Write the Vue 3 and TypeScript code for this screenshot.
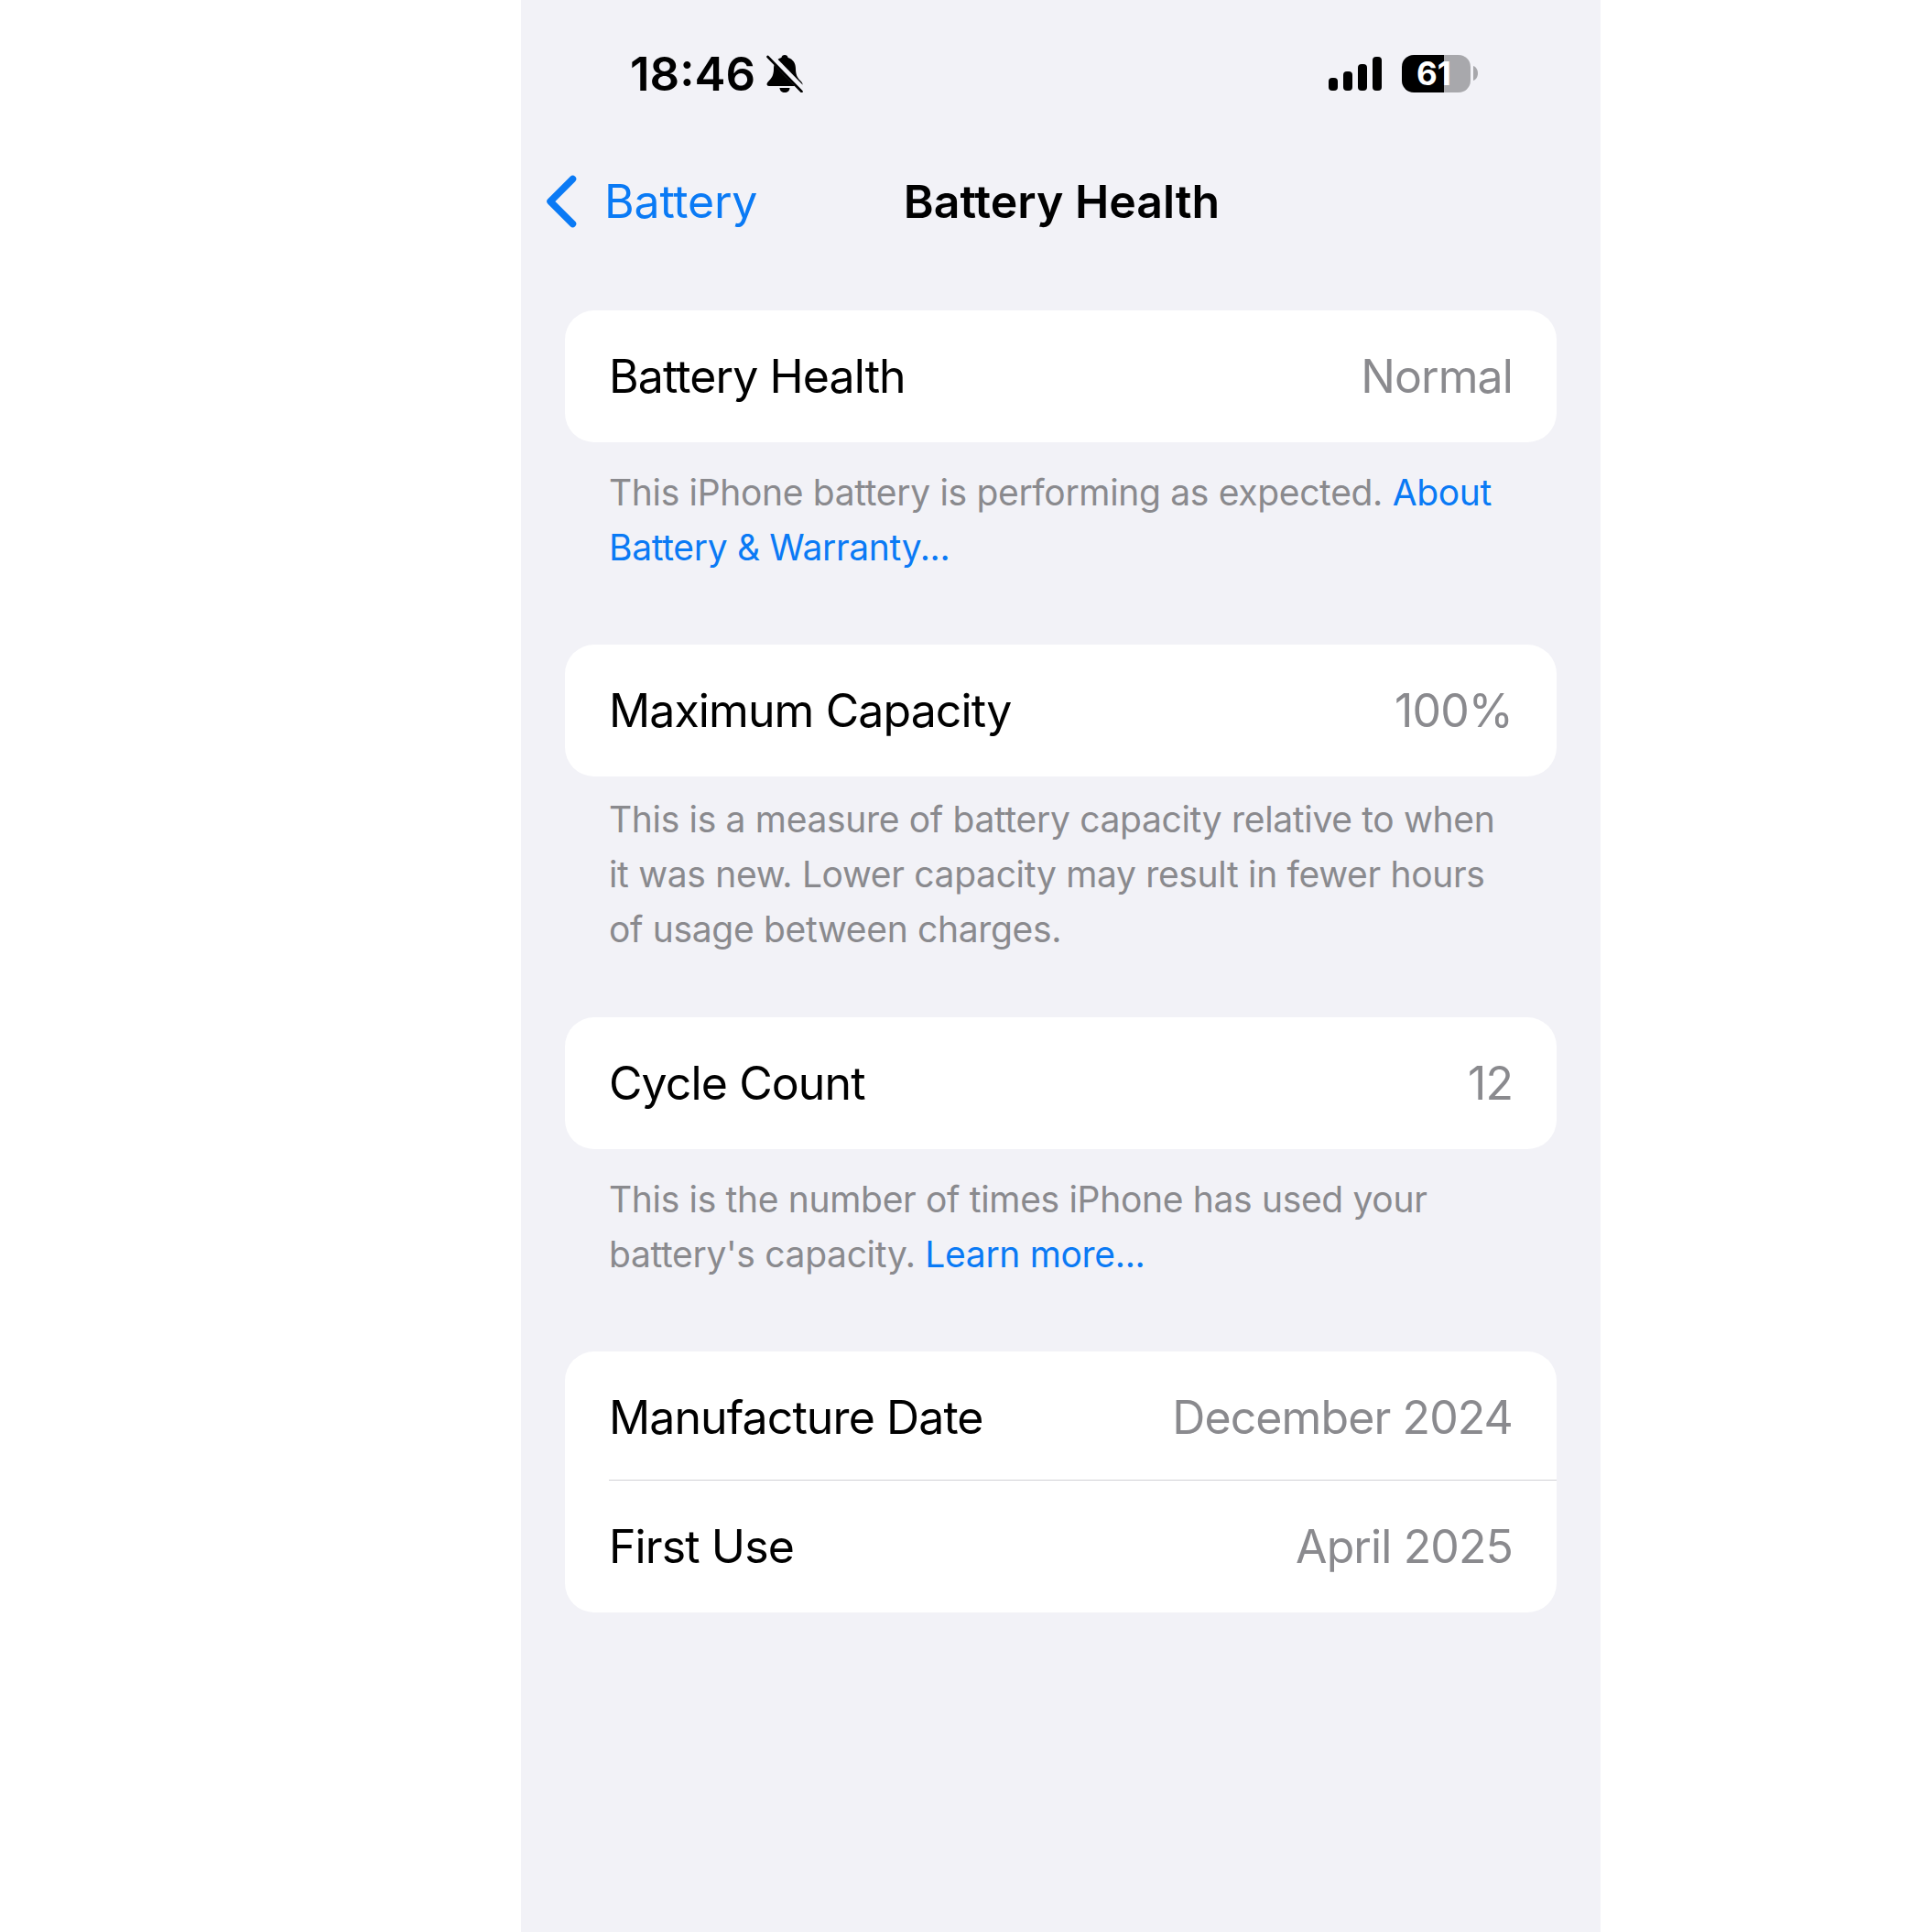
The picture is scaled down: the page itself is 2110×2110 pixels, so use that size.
<script setup lang="ts">
interface Row {
  label: string
  value: string
}

interface Section {
  rows: Row[]
  note?: string
  link?: string
  tight?: boolean
}

const sections: Section[] = [
  {
    rows: [{ label: 'Battery Health', value: 'Normal' }],
    note: 'This iPhone battery is performing as expected. ',
    link: 'About Battery & Warranty...',
  },
  {
    rows: [{ label: 'Maximum Capacity', value: '100%' }],
    note: 'This is a measure of battery capacity relative to when it was new. Lower capacity may result in fewer hours of usage between charges.',
    tight: true,
  },
  {
    rows: [{ label: 'Cycle Count', value: '12' }],
    note: "This is the number of times iPhone has used your battery's capacity. ",
    link: 'Learn more...',
  },
  {
    rows: [
      { label: 'Manufacture Date', value: 'December 2024' },
      { label: 'First Use', value: 'April 2025' },
    ],
  },
]

const bars = [14, 21, 29, 37]
</script>

<template>
  <div class="page">
    <div class="phone">
      <div class="status">
        <div class="status-left">
          <span class="time">18:46</span>
          <svg class="bell" viewBox="0 0 40 42" width="40" height="42">
            <path
              d="M20 1c-2 0-3.300 1.300-3.600 3C10.500 5.800 8 10.500 8 16c0 6-1.500 9.500-5 13-1.800 1.800-2.500 3-2.500 4 0 1.300 1 2 2.500 2h34c1.500 0 2.500-.7 2.500-2 0-1-.7-2.200-2.500-4-3.500-3.500-5-7-5-13 0-5.500-2.500-10.200-8.400-12-.3-1.700-1.600-3-3.600-3z"
              fill="#000"
            />
            <path d="M14.500 37h11c0 3-2.500 5-5.500 5s-5.500-2-5.500-5z" fill="#000" />
            <path d="M2 0l37 38" stroke="#f2f2f7" stroke-width="7" fill="none" />
            <path d="M1.500 3l37 38" stroke="#000" stroke-width="2.600" stroke-linecap="round" fill="none" />
          </svg>
        </div>
        <div class="status-right">
          <div class="signal">
            <i v-for="h in bars" :key="h" :style="{ height: h + 'px' }"></i>
          </div>
          <div class="battery"><span>61</span></div>
          <svg class="cap" viewBox="0 0 5 16" width="5" height="16">
            <path d="M0 0c3 1 5 4 5 8s-2 7-5 8z" fill="#a8a8ac" />
          </svg>
        </div>
      </div>

      <div class="nav">
        <div class="back">
          <svg class="chevron" viewBox="0 0 34 58" width="34" height="58">
            <path d="M29.500 4.500L5 29l24.500 24.500" fill="none" stroke="#0a7af5" stroke-width="7.500" stroke-linecap="round" stroke-linejoin="round" />
          </svg>
          <span>Battery</span>
        </div>
        <div class="title">Battery Health</div>
        <div></div>
      </div>

      <div class="content">
        <section v-for="s in sections" :key="s.rows[0].label">
          <div class="card">
            <div v-for="r in s.rows" :key="r.label" class="row">
              <span>{{ r.label }}</span>
              <span class="value">{{ r.value }}</span>
            </div>
          </div>
          <p v-if="s.note" class="note" :class="{ tight: s.tight }">
            {{ s.note }}<a v-if="s.link">{{ s.link }}</a>
          </p>
        </section>
      </div>
    </div>
  </div>
</template>

<style>
html,
body {
  background: #fff;
}
</style>

<style scoped>
.page {
  width: 2110px;
  height: 2110px;
  padding-left: 569px;
  box-sizing: border-box;
  overflow: hidden;
  font-family: Inter, "Liberation Sans", sans-serif;
  color: #000;
}
.phone {
  width: 1179px;
  height: 2110px;
  background: #f2f2f7;
}
.status {
  height: 160px;
  display: flex;
  align-items: center;
  justify-content: space-between;
  padding: 0 134px 0 119px;
}
.status-left {
  display: flex;
  align-items: center;
  gap: 12px;
}
.time {
  font-size: 51px;
  font-weight: 600;
}
.status-right {
  display: flex;
  align-items: center;
}
.signal {
  display: flex;
  align-items: flex-end;
  gap: 6px;
  margin-right: 22px;
}
.signal i {
  display: block;
  width: 10px;
  border-radius: 4px;
  background: #000;
}
.battery {
  width: 75px;
  height: 41px;
  padding-right: 5px;
  box-sizing: border-box;
  border-radius: 13px;
  display: flex;
  align-items: center;
  justify-content: center;
  background: linear-gradient(to right, #000 46px, #a8a8ac 46px);
  color: #fff;
  font-size: 35px;
  font-weight: 700;
}
.cap {
  margin-left: 3px;
}
.nav {
  height: 120px;
  padding-left: 2px;
  display: grid;
  grid-template-columns: 1fr auto 1fr;
  align-items: center;
}
.back {
  display: flex;
  align-items: center;
  gap: 30px;
  padding-left: 25px;
  color: #0a7af5;
  font-size: 50px;
  letter-spacing: -0.2px;
}
.title {
  font-size: 50px;
  font-weight: 600;
}
.content {
  padding: 59px 48px 0;
}
.card {
  background: #fff;
  border-radius: 32px;
  overflow: hidden;
}
.row {
  height: 144px;
  display: flex;
  align-items: center;
  justify-content: space-between;
  padding: 0 48px;
  font-size: 50px;
  letter-spacing: -0.9px;
}
.row + .row {
  position: relative;
  height: 145px;
}
.row:first-child:not(:last-child) {
  height: 140px;
  padding-top: 3px;
  box-sizing: border-box;
}
.row + .row::before {
  content: '';
  position: absolute;
  left: 48px;
  right: 0;
  top: 0;
  height: 1px;
  background: #d1d1d6;
}
.value {
  color: #8a8a8e;
}
.note {
  margin: 0;
  padding: 25px 48px 76px;
  font-size: 39px;
  line-height: 60px;
  letter-spacing: -0.33px;
  color: #8a8a8e;
}
.note.tight {
  padding-top: 17px;
  padding-bottom: 66px;
}
.note a {
  color: #0a7af5;
}
</style>
